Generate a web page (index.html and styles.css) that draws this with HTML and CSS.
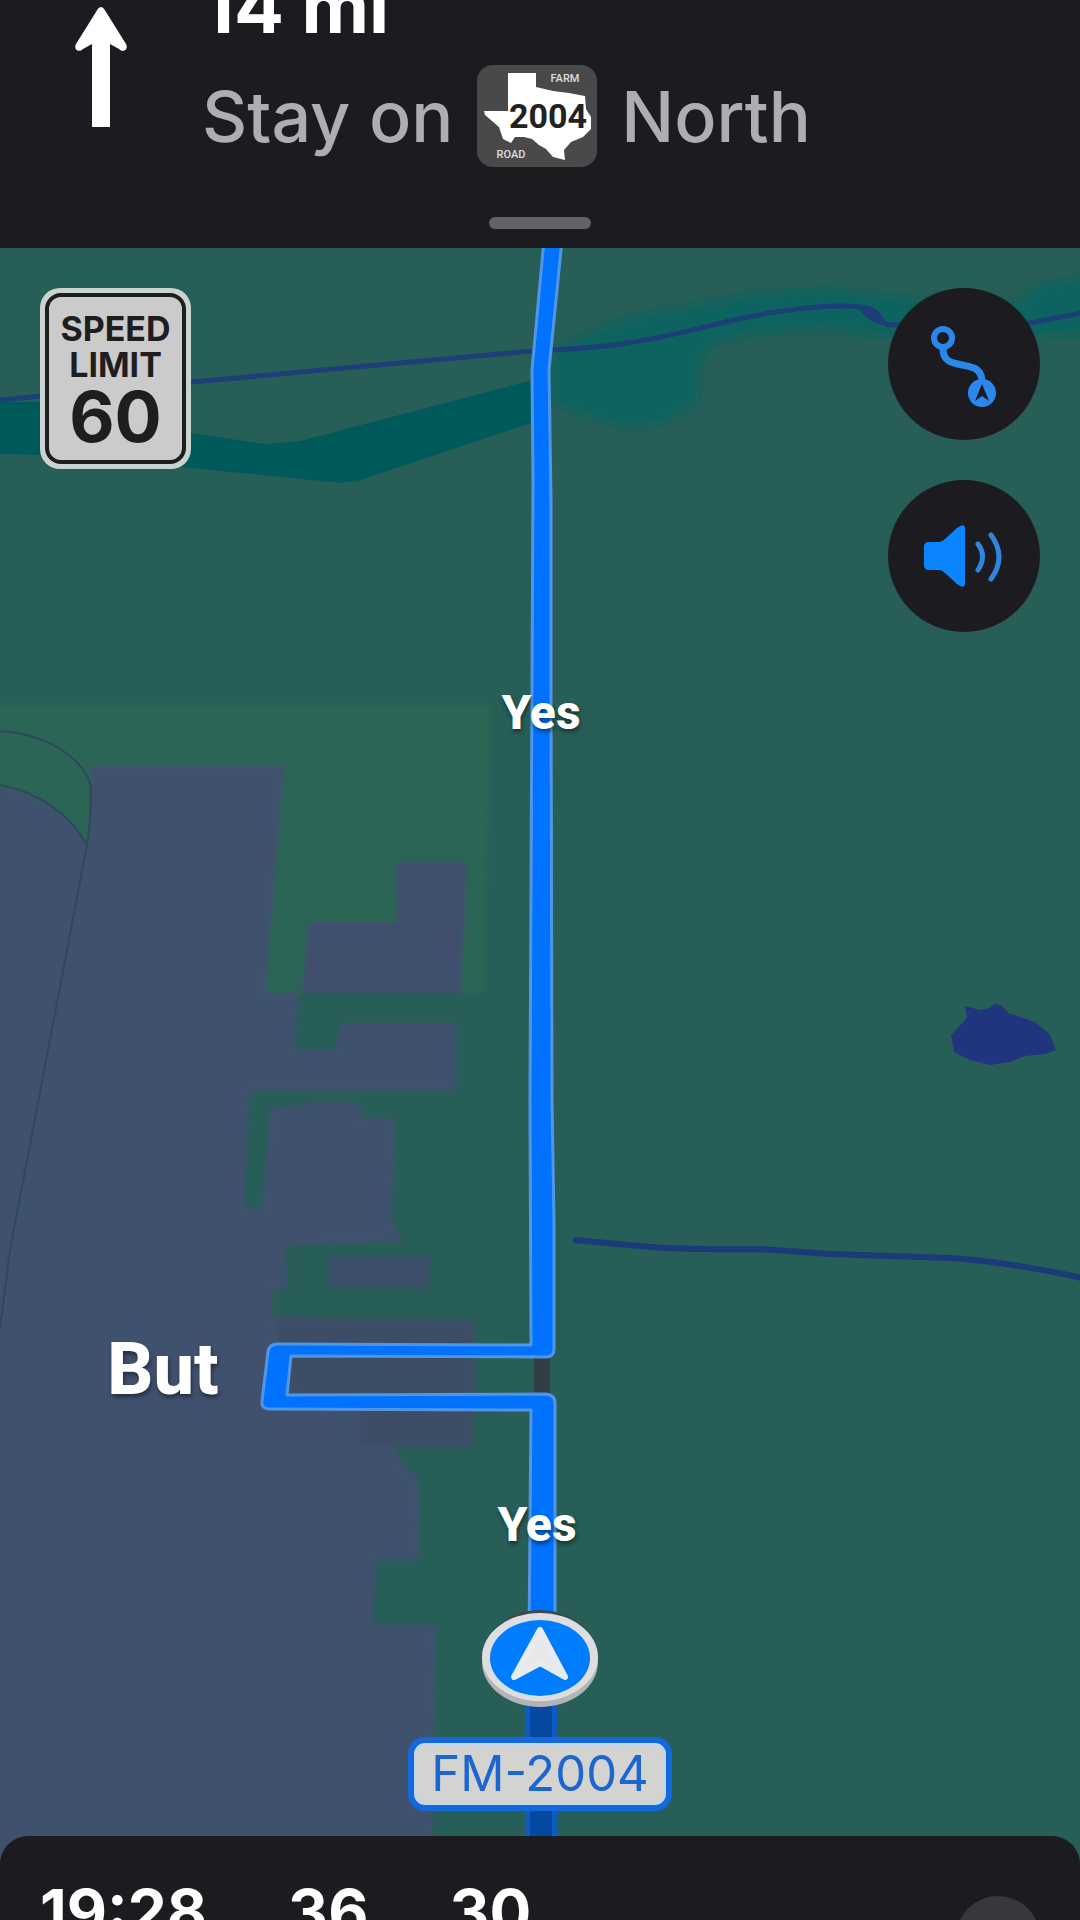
FILE: index.html
```html
<!DOCTYPE html>
<html lang="en">
<head>
<meta charset="utf-8">
<meta name="viewport" content="width=device-width, initial-scale=1">
<title>Navigation</title>
<link rel="stylesheet" href="styles.css">
</head>
<body>
<div class="app">
  <header class="banner">
    <div class="maneuver">
      <svg class="maneuver-arrow" viewBox="0 0 52 122" aria-hidden="true">
        <path d="M26 1C28 1 30 4 31 6L51 38C54 44 48 47 44 43L35 38V121H17V38L8 43C4 47 -2 44 1 38L21 6C22 4 24 1 26 1Z" fill="#fff"/>
      </svg>
      <div class="maneuver-text">
        <p class="distance">14 mi</p>
        <p class="instruction">
          <span>Stay on</span>
          <svg class="shield" viewBox="0 0 120 102" role="img" aria-label="Farm Road 2004">
            <rect width="120" height="102" rx="16" fill="#494949"/>
            <path d="M31 8H59V22L76 26L92 28L108 31L109 44L114 52L114 64L106 72L94 77L87 85L88 95L76 92L69 84L62 80L55 74L47 72L38 72L34 78L26 74L22 62L8 50L7 46H31Z" fill="#fff"/>
            <text class="shield-number" x="71" y="63">2004</text>
            <text class="shield-word" x="88" y="17">FARM</text>
            <text class="shield-word" x="34" y="93">ROAD</text>
          </svg>
          <span>North</span>
        </p>
      </div>
    </div>
    <div class="grabber"></div>
  </header>

  <main class="map">
    <svg class="map-canvas" viewBox="0 248 1080 1616" preserveAspectRatio="xMidYMin slice">
      <defs>
        <filter id="soft" x="-5%" y="-20%" width="110%" height="140%"><feGaussianBlur stdDeviation="4"/></filter>
        <filter id="edge" x="-2%" y="-2%" width="104%" height="104%"><feGaussianBlur stdDeviation="2"/></filter>
      </defs>
      <rect y="248" width="1080" height="1616" fill="#275e57"/>

      <!-- water -->
      <path d="M553 348L600 328L640 314L760 292L830 289L900 297L1020 302L1040 284L1090 276V334L1030 338L880 336L820 329L750 335L712 344L699 362L698 402L660 424L625 428L580 414L553 404Z" fill="#10645f" filter="url(#soft)"/>
      <path d="M0 402L40 402L192 433L265 444L300 441L540 378V420L358 481L340 483L192 468L40 455L0 454Z" fill="#015a5a"/>
      <path d="M0 400L192 382L532 351Q600 348 627 343C670 337 710 325 743 318S830 303 860 307S872 324 893 325H960L1030 323L1082 313" fill="none" stroke="#1d3f78" stroke-width="5"/>
      <path d="M858 306Q866 324 890 326Q876 316 872 309Z" fill="#1d3f78"/>
      <path d="M573 1240L640 1246Q680 1250 760 1249L830 1254L950 1258Q1010 1262 1082 1278" fill="none" stroke="#1b3a78" stroke-width="6"/>
      <path d="M965 1006L980 1010L990 1008Q997 998 1008 1013L1035 1022L1050 1035L1056 1050L1045 1054L1025 1056L1010 1062L990 1065L970 1060L954 1052L951 1035L967 1018Z" fill="#20357d"/>

      <!-- land parcels -->
      <g filter="url(#edge)">
        <path d="M-9 704H492L484 993H-9Z" fill="#2b6555"/>
        <path d="M-9 785Q60 795 87 845Q92 810 90 766H284L275 880L265 993H298L295 1050H335L340 1023H456V1091H250L244 1209H262L270 1109L310 1103H360V1118H395L392 1220L403 1241L285 1246L288 1288L272 1290V1317L473 1320L476 1380L472 1447H395L401 1462L418 1478L420 1510L418 1560H377L372 1625H436L432 1880H-9Z" fill="#3f516e"/>
        <path d="M395 862H467L461 993H302L308 922H397Z" fill="#3f506d"/>
        <path d="M328 1257H432L428 1288H330Z" fill="#3e4f67"/>
        <path d="M278 1317L473 1320L476 1380L472 1447H360V1400L280 1390Z" fill="#3e4e66"/>
      </g>
      <path d="M0 731C60 735 91 770 91 790Q91 820 87 845Q60 797 0 785M87 845L10 1250L0 1328" fill="none" stroke="#2c4a58" stroke-width="2"/>

      <!-- road and route -->
      <rect x="534" y="1350" width="16" height="50" fill="#323d48"/>
      <path d="M525 1690H557V1860H525Z" fill="#0d5bc4"/>
      <path d="M530 1690H552V1860H530Z" fill="#0448a0"/>
      <path d="M544 240H562L549 370L551 500L551 680L552 1100L554 1220V1349Q554 1357 546 1357L291 1356L287 1395L546 1394Q555 1395 555 1403V1640H529L531 1410L270 1409Q261 1409 262 1401L268 1352Q269 1344 278 1344L531 1345L530 1100L532 680L533 480L532 370Z" fill="#0072fd" stroke="#4f97e6" stroke-width="3" stroke-linejoin="round"/>

      <!-- current position -->
      <ellipse cx="540" cy="1656" rx="56" ry="46" fill="#3a4a4a"/>
      <ellipse cx="540" cy="1662" rx="58" ry="45" fill="#b3b5b5"/>
      <ellipse cx="540" cy="1657" rx="58" ry="44" fill="#dcdee2"/>
      <ellipse cx="540" cy="1658" rx="50" ry="38" fill="#007cff"/>
      <path d="M540 1630L565 1677L540 1663L514 1677Z" fill="#e8e8e8" stroke="#e8ecf2" stroke-width="6" stroke-linejoin="round"/>

      <rect x="411" y="1740" width="258" height="68" rx="14" fill="#bfd6f2" stroke="#1369dc" stroke-width="6"/>
      <rect x="416" y="1745" width="248" height="58" rx="9" fill="#d3d3d2"/>
      <text class="road-name" x="540" y="1791">FM-2004</text>
      <text class="note" x="541" y="729">Yes</text>
      <text class="note note-large" x="163" y="1394">But</text>
      <text class="note" x="537" y="1541">Yes</text>
    </svg>

    <div class="map-controls">
      <div class="speed-sign">
        <div class="speed-face">
          <span>SPEED</span>
          <span>LIMIT</span>
          <strong>60</strong>
        </div>
      </div>
      <div class="buttons">
        <button class="round" type="button" aria-label="Route overview">
          <svg viewBox="0 0 152 152" aria-hidden="true">
            <circle cx="55" cy="50" r="9" fill="none" stroke="#2c87ec" stroke-width="6"/>
            <path d="M55 61C55 86 92 68 94 92" fill="none" stroke="#2c87ec" stroke-width="7"/>
            <circle cx="94" cy="105" r="14" fill="#2c87ec"/>
            <path d="M94 96L101 113L94 108L87 113Z" fill="#1c1c20"/>
          </svg>
        </button>
        <button class="round" type="button" aria-label="Sound">
          <svg viewBox="0 0 152 152" aria-hidden="true">
            <path d="M41 62H51Q54 62 57 59L69 48Q77 42 77 49V103Q77 110 69 104L57 93Q54 90 51 90H41Q36 90 36 85V67Q36 62 41 62Z" fill="#0a84ff"/>
            <path d="M90 64Q99 76 90 90M103 55Q119 77 103 99" fill="none" stroke="#2f86e0" stroke-width="5" stroke-linecap="round"/>
          </svg>
        </button>
      </div>
    </div>
  </main>

  <footer class="trip">
    <span>19:28</span>
    <span>36</span>
    <span>30</span>
    <button class="more" type="button" aria-label="More"></button>
  </footer>
</div>
</body>
</html>
```
FILE: styles.css
```css
* { box-sizing: border-box; }

body {
  margin: 0;
  background: #1c1c20;
  font-family: Inter, "Liberation Sans", sans-serif;
}

p { margin: 0; }

button {
  padding: 0;
  border: 0;
}

.app {
  display: flex;
  flex-direction: column;
  height: 100vh;
  overflow: hidden;
}

/* Upcoming maneuver */
.banner {
  display: flex;
  flex: none;
  flex-direction: column;
  justify-content: flex-end;
  align-items: center;
  gap: 49px;
  height: 248px;
  padding-bottom: 19px;
  overflow: hidden;
  background: #1c1c20;
}

.maneuver {
  display: flex;
  align-items: flex-end;
  gap: 75px;
  width: 100%;
  padding-left: 75px;
}

.maneuver-arrow {
  width: 52px;
  height: 122px;
  margin-bottom: 40px;
}

.distance {
  color: #fff;
  font-size: 74px;
  font-weight: 700;
  line-height: 80px;
}

.instruction {
  display: flex;
  align-items: center;
  gap: 24px;
  height: 104px;
  margin-top: 18px;
  color: #aeadb4;
  font-size: 70px;
  font-weight: 500;
  white-space: nowrap;
}

.shield {
  width: 120px;
  height: 102px;
}

.shield-number {
  fill: #222;
  font-family: Roboto, sans-serif;
  font-size: 34px;
  font-weight: 700;
  text-anchor: middle;
}

.shield-word {
  fill: #ddd;
  font-family: Roboto, sans-serif;
  font-size: 11px;
  font-weight: 500;
  text-anchor: middle;
}

.grabber {
  flex: none;
  width: 102px;
  height: 12px;
  border-radius: 6px;
  background: #636267;
}

/* Map */
.map {
  position: relative;
  flex: 1;
  min-height: 0;
}

.map-canvas {
  position: absolute;
  inset: 0;
  width: 100%;
  height: 100%;
}

.road-name {
  fill: #1d66cf;
  font-size: 49px;
  text-anchor: middle;
}

.note {
  fill: #fff;
  font-family: Roboto, sans-serif;
  font-size: 48px;
  font-weight: 800;
  text-anchor: middle;
  text-shadow: 1px 3px 4px rgba(0, 0, 0, 0.45);
}

.note-large { font-size: 72px; }

.map-controls {
  position: relative;
  display: flex;
  justify-content: space-between;
  align-items: flex-start;
  padding: 40px;
}

.speed-sign {
  width: 151px;
  padding: 5px;
  border-radius: 20px;
  background: #cbd3d1;
}

.speed-face {
  display: flex;
  flex-direction: column;
  align-items: center;
  height: 171px;
  padding-top: 14px;
  border: 4px solid #1e1e1e;
  border-radius: 16px;
  background: #cbcbcb;
  color: #1e1e1e;
  font-size: 34px;
  font-weight: 700;
  line-height: 36px;
}

.speed-face strong {
  font-size: 70px;
  font-weight: 700;
  line-height: 68px;
}

.buttons {
  display: flex;
  flex-direction: column;
  gap: 40px;
}

.round {
  width: 152px;
  height: 152px;
  border-radius: 50%;
  background: #1c1c20;
}

.round svg {
  display: block;
  width: 100%;
}

/* Trip summary: its rounded top corners lie over the map */
.trip {
  position: relative;
  display: flex;
  flex: none;
  align-items: flex-start;
  gap: 81px;
  height: 84px;
  margin-top: -28px;
  padding: 46px 40px 0;
  overflow: hidden;
  border-radius: 28px 28px 0 0;
  background: #1c1c20;
  color: #fff;
  font-size: 62px;
  font-weight: 700;
  line-height: 60px;
}

.more {
  flex: none;
  width: 84px;
  height: 84px;
  margin: 14px 0 0 auto;
  border-radius: 50%;
  background: #38373c;
}
```
